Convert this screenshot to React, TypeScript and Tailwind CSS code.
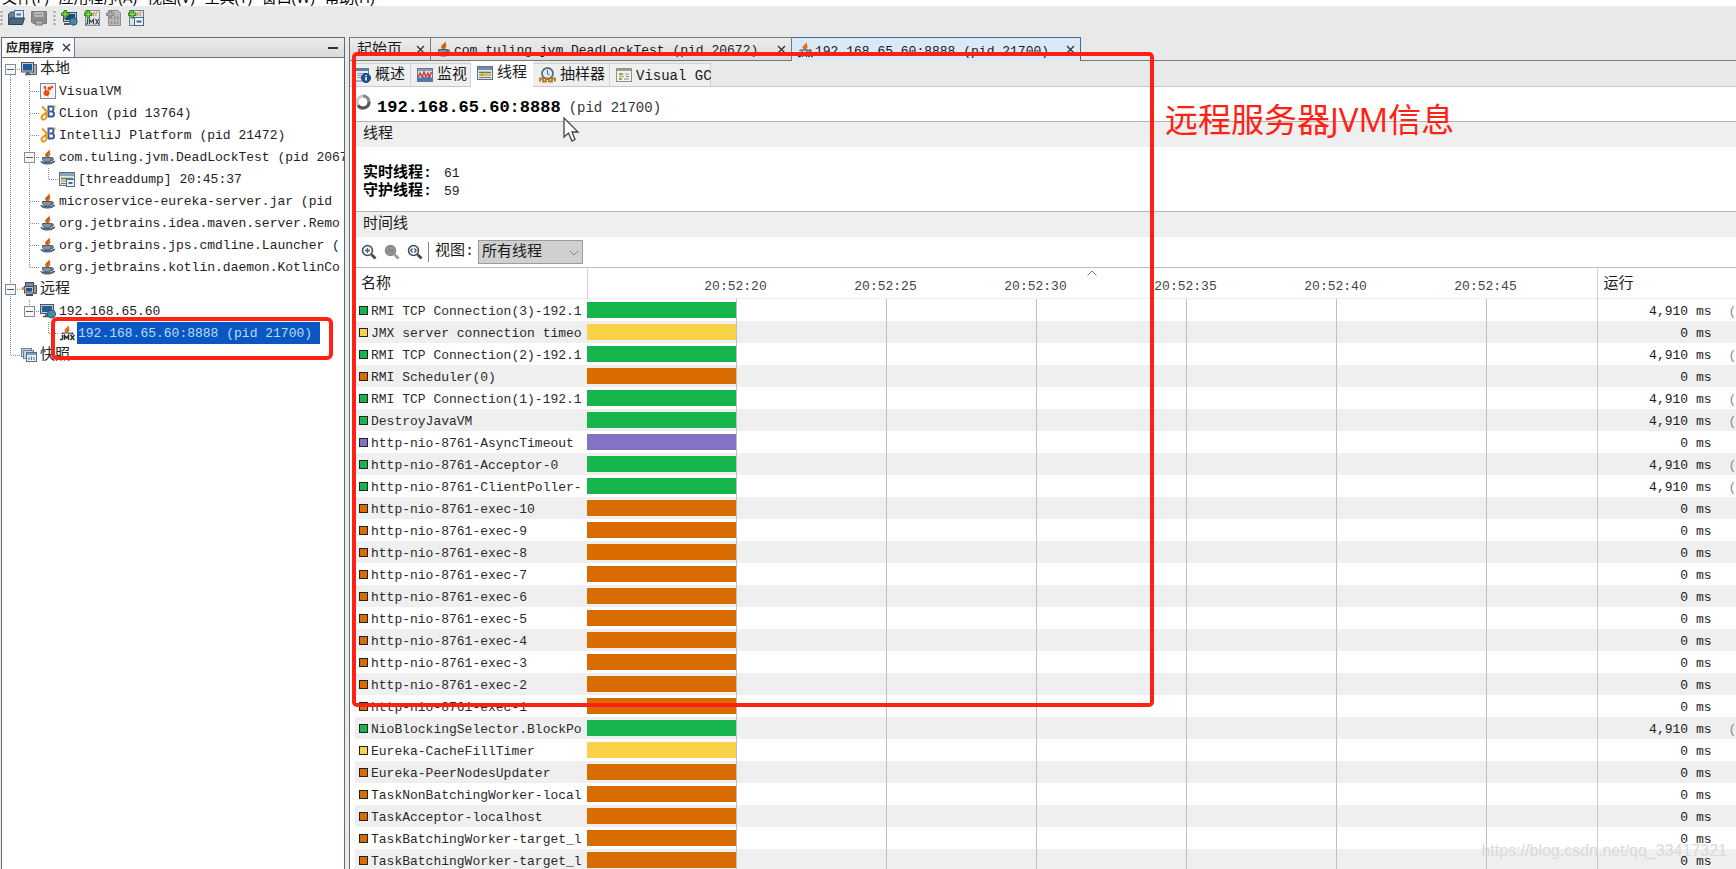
import React, { FC, ReactNode } from 'react'

// types
type IconProps = { className?: string }

type GuideKind = 'line' | 'tee' | 'end' | 'open' | 'openLast' | 'openFirst' | 'blank'

type TreeNode = {
  label: string
  icon: FC<IconProps>
  guides: GuideKind[]
  selected?: boolean
}

type ThreadState = 'running' | 'wait' | 'park' | 'sleeping'

type Thread = {
  name: string
  state: ThreadState
}

// icons
const JavaIcon: FC<IconProps> = ({ className = '' }) => (
  <svg className={`shrink-0 ${className}`} width="16" height="16" viewBox="0 0 16 16" fill="none">
    <path d="M9 0C10 2 5 3.500 5 6C5 7.500 6.500 8 7.600 9C9 8 11.500 5 10 3.500C10.200 2 9.800 0.800 9 0Z" fill="#e0701a" />
    <path d="M9 3C7 4.500 7 6 8 7.500" stroke="#a94c0c" />
    <path d="M2.500 8.500H11.500C11.500 11 10.500 12.500 9 13H5C3.500 12.500 2.500 11 2.500 8.500Z" fill="#7d93a8" stroke="#44586c" />
    <path d="M11.500 9C14 8.500 14 11.500 10.500 11.500" stroke="#44586c" strokeWidth="1.300" />
    <path d="M0.800 12.500C2 16 13 16 15 12C11 14 4 14 0.800 12.500Z" fill="#6d8296" stroke="#44586c" />
  </svg>
)

const JmxIcon: FC<IconProps> = ({ className = '' }) => (
  <svg className={`shrink-0 ${className}`} width="16" height="16" viewBox="0 0 16 16" fill="none">
    <path d="M9 0C10 2 5 3.500 5.500 6L7.600 8.500C10 7 11.500 5 10 3.500C10.200 2 9.800 0.800 9 0Z" fill="#e0701a" />
    <path d="M2.500 9C3.500 7.500 11 7.500 12 9M12 8C14.500 7.500 14.500 9.500 12.500 9.500" stroke="#5b6672" strokeWidth="1.400" />
    <path d="M3.500 10V13.500Q3.500 15 1 14.500M5.500 15V10.500L7.500 13L9.500 10.500V15M11.500 10L15.500 15M15.500 10L11.500 15" stroke="#2f2f2f" strokeWidth="1.500" />
  </svg>
)

const JetBrainsIcon: FC<IconProps> = ({ className = '' }) => (
  <svg className={`shrink-0 ${className}`} width="16" height="16" viewBox="0 0 16 16" fill="none">
    <path d="M8.500 1.500H12Q13.500 1.500 13.500 4Q13.500 6 12 6.500Q14 7 14 9Q14 11.500 12 11.500H8.500Z" stroke="#3a5a9c" strokeWidth="2" />
    <path d="M8.500 6.500H12" stroke="#3a5a9c" strokeWidth="1.500" />
    <path d="M2 1.500L6.500 6V11Q6 15 3 14.500Q0.800 13.500 2 11L8 6M4 9.500L1 12" stroke="#e39a1c" strokeWidth="2" />
    <path d="M13.500 0.500L15.500 2" stroke="#e39a1c" strokeWidth="1.500" />
  </svg>
)

const VisualVmIcon: FC<IconProps> = ({ className = '' }) => (
  <svg className={`shrink-0 ${className}`} width="16" height="16" viewBox="0 0 16 16" fill="none">
    <rect x="0.500" y="0.500" width="15" height="15" fill="#f6f4f2" stroke="#6d8bb5" />
    <circle cx="6.500" cy="10" r="3" fill="#e2521a" />
    <circle cx="5" cy="4.500" r="1.400" fill="#e2521a" />
    <circle cx="9.500" cy="5.500" r="2" fill="#e2521a" />
    <circle cx="12" cy="4" r="1.300" fill="#e2521a" />
    <path d="M5 4.500L6.500 9M9.500 5.500L12 3.500M6.500 10L8 13.500" stroke="#e2521a" />
  </svg>
)

const LocalIcon: FC<IconProps> = ({ className = '' }) => (
  <svg className={`shrink-0 ${className}`} width="16" height="16" viewBox="0 0 16 16" fill="none">
    <path d="M12 3.500H15.500V13.500H10" fill="#a9adb3" stroke="#5f656d" />
    <rect x="0.500" y="1.500" width="12" height="9.500" fill="#c4c9d0" stroke="#4b5563" />
    <rect x="2" y="3" width="9" height="6.500" fill="#1d5a94" />
    <path d="M4 13.500H10M5 12H9" stroke="#555b63" strokeWidth="1.500" />
  </svg>
)

const RemoteIcon: FC<IconProps> = ({ className = '' }) => (
  <svg className={`shrink-0 ${className}`} width="16" height="16" viewBox="0 0 16 16" fill="none">
    <rect x="4.500" y="1.500" width="8" height="6" fill="#7c8ba0" stroke="#3e4a5b" />
    <path d="M12.500 4.500H15.500V12.500H12" fill="#949ca8" stroke="#4b5563" />
    <rect x="3.500" y="5.500" width="9" height="6.500" fill="#b8c1cc" stroke="#3e4a5b" />
    <rect x="5" y="7" width="6" height="3.500" fill="#1f5188" />
    <path d="M5 14H12" stroke="#3e4a5b" strokeWidth="2" />
    <path d="M0 7.500L2 5.500L4 7.500L2 9.500Z" fill="#c98a3c" />
  </svg>
)

const HostIcon: FC<IconProps> = ({ className = '' }) => (
  <svg className={`shrink-0 ${className}`} width="16" height="16" viewBox="0 0 16 16" fill="none">
    <rect x="0.500" y="1.500" width="13" height="9" fill="#c4c9d0" stroke="#4b5563" />
    <rect x="2" y="3" width="10" height="6" fill="#215f99" />
    <path d="M3 13.500H8M5 12H8" stroke="#555b63" strokeWidth="1.500" />
    <circle cx="11.500" cy="11" r="4" fill="#4a88c7" stroke="#24507c" />
    <path d="M10 8.500Q13 8 12 10.500Q14 12 11.500 14Q11 11.500 9 10.500Z" fill="#3f9b35" />
  </svg>
)

const SnapshotIcon: FC<IconProps> = ({ className = '' }) => (
  <svg className={`shrink-0 ${className}`} width="16" height="16" viewBox="0 0 16 16" fill="none">
    <rect x="0.500" y="1.500" width="10" height="8" fill="#c6d3e1" stroke="#6b7f96" />
    <rect x="2.500" y="3.500" width="10" height="8" fill="#c6d3e1" stroke="#6b7f96" />
    <rect x="5.500" y="5.500" width="10" height="9" fill="#e8eef5" stroke="#55708f" />
    <path d="M6 7H15" stroke="#7f9dbd" strokeWidth="2" />
    <path d="M8 13V10M10.500 13V9.500M13 13V10" stroke="#55708f" />
  </svg>
)

const ThreadsIcon: FC<IconProps> = ({ className = '' }) => (
  <svg className={`shrink-0 ${className}`} width="16" height="16" viewBox="0 0 16 16" fill="none">
    <rect x="0.500" y="1.500" width="15" height="13" fill="#e4e8ec" stroke="#5c7087" />
    <path d="M1 3.500H15" stroke="#6f8db0" strokeWidth="3" />
    <path d="M2 7.500H14" stroke="#3f8d3a" strokeWidth="1.500" />
    <path d="M2 10H14" stroke="#e0a72b" strokeWidth="1.500" />
    <path d="M2 12.500H14" stroke="#6f7680" />
    <path d="M7 7.500H10M4 10H6" stroke="#d66a1d" strokeWidth="1.500" />
  </svg>
)

const DumpIcon: FC<IconProps> = ({ className = '' }) => (
  <svg className={`shrink-0 ${className}`} width="16" height="16" viewBox="0 0 16 16" fill="none">
    <rect x="0.500" y="1.500" width="15" height="13" fill="#e4e8ec" stroke="#5c7087" />
    <path d="M1 3.500H15" stroke="#8ba2bd" strokeWidth="3" />
    <path d="M2 7.500H14" stroke="#4f8d4a" strokeWidth="1.500" />
    <path d="M2 10H8" stroke="#e0a72b" strokeWidth="1.500" />
    <path d="M2 12.500H7" stroke="#6f7680" />
    <rect x="7.500" y="8.500" width="8" height="7" fill="#eef3f8" stroke="#4c6c90" />
    <path d="M9.500 12H13.500" stroke="#4c6c90" strokeWidth="2" />
  </svg>
)

const OverviewIcon: FC<IconProps> = ({ className = '' }) => (
  <svg className={`shrink-0 ${className}`} width="16" height="16" viewBox="0 0 16 16" fill="none">
    <rect x="0.500" y="1.500" width="13" height="12.500" fill="#e6ebf1" stroke="#63788f" />
    <path d="M1 3H13" stroke="#5a83b5" strokeWidth="2" />
    <path d="M2.500 6.500H11M2.500 8.500H8M2.500 10.500H7" stroke="#8795a5" />
    <circle cx="11" cy="11" r="4.500" fill="#1f4f9e" stroke="#173b78" />
    <path d="M11 8V9.200M11 10V13.500" stroke="#fff" strokeWidth="1.500" />
  </svg>
)

const MonitorIcon: FC<IconProps> = ({ className = '' }) => (
  <svg className={`shrink-0 ${className}`} width="16" height="16" viewBox="0 0 16 16" fill="none">
    <rect x="0.500" y="1.500" width="15" height="13" fill="#dde5ee" stroke="#63788f" />
    <path d="M1 3H15" stroke="#7f9dbd" strokeWidth="2" />
    <path d="M1 14V10L4 11L6 9L9 11L12 9L15 11V14Z" fill="#4879b6" />
    <path d="M1.500 10L3 6L5 10L7 5L9 10L11 6L12.500 10L14.500 5" stroke="#d63b32" strokeWidth="1.500" />
  </svg>
)

const SamplerIcon: FC<IconProps> = ({ className = '' }) => (
  <svg className={`shrink-0 ${className}`} width="17" height="16" viewBox="0 0 17 16" fill="none">
    <circle cx="8.500" cy="6.500" r="5.500" fill="#e3e9f1" stroke="#5b6b85" strokeWidth="1.800" />
    <path d="M8.500 3V7L10.500 8" stroke="#3b6aa8" />
    <path d="M1 14.500V11.500H4V14.500H7V11.500H10V14.500H13V11.500H16V14.500" stroke="#b9781b" strokeWidth="1.800" />
  </svg>
)

const GcIcon: FC<IconProps> = ({ className = '' }) => (
  <svg className={`shrink-0 ${className}`} width="16" height="16" viewBox="0 0 16 16" fill="none">
    <rect x="0.500" y="1.500" width="15" height="13" fill="#f3f4f2" stroke="#8a9188" />
    <path d="M1 3H15" stroke="#9aa19c" strokeWidth="2" />
    <path d="M3 7H7M3 12H6" stroke="#4c9a44" strokeWidth="1.500" />
    <path d="M9 7H13M8 12H13" stroke="#8b9097" />
    <path d="M3 9.500H8" stroke="#e0a72b" strokeWidth="1.500" />
    <path d="M10 9.500H13" stroke="#4c9a44" />
  </svg>
)

const Plus = () => (
  <path d="M3 0.500H5.500V3H8V5.500H5.500V8H3V5.500H0.500V3H3Z" fill="#7ed348" stroke="#2c7d14" />
)

const OpenIcon: FC<IconProps> = () => (
  <svg width="17" height="16" viewBox="0 0 17 16" fill="none">
    <path d="M0.500 14V4L3 2H8V9H1Z" fill="#6c8197" stroke="#3c5068" />
    <rect x="6.500" y="0.500" width="9" height="8" fill="#dfe9f4" stroke="#4b73a0" />
    <path d="M8.500 4.500H13" stroke="#4b73a0" strokeWidth="2" />
    <path d="M0.500 14.500L2.500 8H16.500L14.500 14.500Z" fill="#4d6882" stroke="#2c3e52" />
  </svg>
)

const SaveIcon: FC<IconProps> = () => (
  <svg width="16" height="16" viewBox="0 0 16 16" fill="none">
    <path d="M0.500 1.500H15.500V13.500H2L0.500 12Z" fill="#8d8d8d" stroke="#7c7c7c" />
    <path d="M3.500 2H12.500V7H3.500Z" fill="#b9b9b9" />
    <path d="M5 4.500H11" stroke="#8d8d8d" />
    <path d="M4.500 13V10.500H11.500V15H4.500Z" fill="#a9a9a9" stroke="#7c7c7c" />
  </svg>
)

const AddHostIcon: FC<IconProps> = () => (
  <svg width="17" height="16" viewBox="0 0 17 16" fill="none">
    <rect x="2.500" y="2.500" width="13" height="9" fill="#bcc6d2" stroke="#36506e" />
    <rect x="4" y="4" width="10" height="6" fill="#1c4a7c" />
    <path d="M3 14H9" stroke="#4b5563" strokeWidth="2" />
    <circle cx="12.500" cy="11.500" r="3.700" fill="#4a88c7" stroke="#24507c" />
    <path d="M11 9.500Q14 9 13 11.500Q15 12.500 12.500 14.500Q12 12 10.500 11.500Z" fill="#3f9b35" />
    <Plus />
  </svg>
)

const AddJmxIcon: FC<IconProps> = () => (
  <svg width="16" height="16" viewBox="0 0 16 16" fill="none">
    <rect x="1.500" y="0.500" width="14" height="15" fill="#dfe4e9" stroke="#8492a0" />
    <path d="M10.500 2Q8.500 4 10 6M13 1.500Q11 4 12 6" stroke="#e0832e" />
    <path d="M3.500 9V13Q3.500 14.500 1.500 14M5.500 14.500V9.500L7.500 12L9.500 9.500V14.500M11.500 9L15 14.500M15 9L11.500 14.500" stroke="#39424d" strokeWidth="1.200" />
    <Plus />
  </svg>
)

const AddCoreIcon: FC<IconProps> = () => (
  <svg width="16" height="16" viewBox="0 0 16 16" fill="none">
    <path d="M2.500 0.500H12L14.500 3V15.500H2.500Z" fill="#b8b8b8" stroke="#8f8f8f" />
    <path d="M9 6.500V9.500M12 6.500V9.500M5.500 11.500V14M8.500 11.500V14M11.500 11.500V14" stroke="#888" strokeWidth="1.300" />
    <path d="M3 0.500H5.500V3H8V5.500H5.500V8H3V5.500H0.500V3H3Z" fill="#a8a8a8" stroke="#858585" />
  </svg>
)

const AddSnapshotIcon: FC<IconProps> = () => (
  <svg width="16" height="16" viewBox="0 0 16 16" fill="none">
    <rect x="1.500" y="0.500" width="14" height="15" fill="#dfe4e9" stroke="#6b7f96" />
    <path d="M10.500 2Q8.500 4 10.500 6M13 1.500Q11 4 12.500 6" stroke="#e0832e" />
    <rect x="6.500" y="7.500" width="9" height="8" fill="#eef4fa" stroke="#3f679a" />
    <path d="M8.500 11.500H13.500" stroke="#3f679a" strokeWidth="2" />
    <Plus />
  </svg>
)

const ZoomIcon: FC<{ kind: 'in' | 'out' | 'fit' }> = ({ kind }) => (
  <svg width="16" height="16" viewBox="0 0 16 16" fill="none">
    <circle cx="6.500" cy="6.500" r="5" fill={kind === 'out' ? '#929292' : '#f4f6f8'} stroke={kind === 'out' ? '#8a8a8a' : '#434b55'} strokeWidth="1.500" />
    <path d="M10.500 10.500L14.500 14.500" stroke={kind === 'out' ? '#9a9a9a' : '#434b55'} strokeWidth="2.800" />
    {kind === 'in' && <path d="M4 6.500H9M6.500 4V9" stroke="#3e5c86" strokeWidth="1.300" />}
    {kind === 'out' && <path d="M4 6.500H9" stroke="#808080" strokeWidth="1.300" />}
    {kind === 'fit' && <path d="M5.500 4.500L3.800 6.500L5.500 8.500M7.500 4.500L9.200 6.500L7.500 8.500" stroke="#3e5c86" strokeWidth="1.300" />}
  </svg>
)

const CloseIcon: FC<IconProps> = () => (
  <svg width="9" height="9" viewBox="0 0 9 9" fill="none">
    <path d="M1 1L8 8M8 1L1 8" stroke="#333" strokeWidth="1.300" />
  </svg>
)

// one 19px column of the tree's dotted lines
const Guide: FC<{ kind: GuideKind }> = ({ kind }) => {
  const open = kind === 'open' || kind === 'openLast' || kind === 'openFirst'
  return (
    <svg className="shrink-0" width="19" height="22" viewBox="0 0 19 22" fill="none">
      <g stroke="#8c8c8c" strokeDasharray="1 1">
        {(kind === 'line' || kind === 'tee' || kind === 'open') && <path d="M8.500 0V22" />}
        {kind === 'openFirst' && <path d="M8.500 11V22" />}
        {(kind === 'end' || kind === 'openLast') && <path d="M8.500 0V11" />}
        {kind !== 'line' && kind !== 'blank' && <path d="M9 11.500H19" />}
      </g>
      {open && (
        <>
          <rect x="3.500" y="6.500" width="10" height="10" fill="#f6f6f6" stroke="#858b94" />
          <path d="M5 11.500H12" stroke="#3f5f95" />
        </>
      )}
    </svg>
  )
}

// data
const menus = ['文件(F)', '应用程序(A)', '视图(V)', '工具(T)', '窗口(W)', '帮助(H)']

const tree: TreeNode[] = [
  { label: '本地', icon: LocalIcon, guides: ['openFirst'] },
  { label: 'VisualVM', icon: VisualVmIcon, guides: ['line', 'tee'] },
  { label: 'CLion (pid 13764)', icon: JetBrainsIcon, guides: ['line', 'tee'] },
  { label: 'IntelliJ Platform (pid 21472)', icon: JetBrainsIcon, guides: ['line', 'tee'] },
  { label: 'com.tuling.jvm.DeadLockTest (pid 20672)', icon: JavaIcon, guides: ['line', 'open'] },
  { label: '[threaddump] 20:45:37', icon: DumpIcon, guides: ['line', 'line', 'end'] },
  { label: 'microservice-eureka-server.jar (pid', icon: JavaIcon, guides: ['line', 'tee'] },
  { label: 'org.jetbrains.idea.maven.server.Remo', icon: JavaIcon, guides: ['line', 'tee'] },
  { label: 'org.jetbrains.jps.cmdline.Launcher (', icon: JavaIcon, guides: ['line', 'tee'] },
  { label: 'org.jetbrains.kotlin.daemon.KotlinCo', icon: JavaIcon, guides: ['line', 'end'] },
  { label: '远程', icon: RemoteIcon, guides: ['open'] },
  { label: '192.168.65.60', icon: HostIcon, guides: ['line', 'openLast'] },
  { label: '192.168.65.60:8888 (pid 21700)', icon: JmxIcon, guides: ['line', 'blank', 'end'], selected: true },
  { label: '快照', icon: SnapshotIcon, guides: ['end'] },
]

const times = ['20:52:20', '20:52:25', '20:52:30', '20:52:35', '20:52:40', '20:52:45']

const threads: Thread[] = [
  { name: 'RMI TCP Connection(3)-192.1', state: 'running' },
  { name: 'JMX server connection timeo', state: 'wait' },
  { name: 'RMI TCP Connection(2)-192.1', state: 'running' },
  { name: 'RMI Scheduler(0)', state: 'park' },
  { name: 'RMI TCP Connection(1)-192.1', state: 'running' },
  { name: 'DestroyJavaVM', state: 'running' },
  { name: 'http-nio-8761-AsyncTimeout', state: 'sleeping' },
  { name: 'http-nio-8761-Acceptor-0', state: 'running' },
  { name: 'http-nio-8761-ClientPoller-', state: 'running' },
  { name: 'http-nio-8761-exec-10', state: 'park' },
  { name: 'http-nio-8761-exec-9', state: 'park' },
  { name: 'http-nio-8761-exec-8', state: 'park' },
  { name: 'http-nio-8761-exec-7', state: 'park' },
  { name: 'http-nio-8761-exec-6', state: 'park' },
  { name: 'http-nio-8761-exec-5', state: 'park' },
  { name: 'http-nio-8761-exec-4', state: 'park' },
  { name: 'http-nio-8761-exec-3', state: 'park' },
  { name: 'http-nio-8761-exec-2', state: 'park' },
  { name: 'http-nio-8761-exec-1', state: 'park' },
  { name: 'NioBlockingSelector.BlockPo', state: 'running' },
  { name: 'Eureka-CacheFillTimer', state: 'wait' },
  { name: 'Eureka-PeerNodesUpdater', state: 'park' },
  { name: 'TaskNonBatchingWorker-local', state: 'park' },
  { name: 'TaskAcceptor-localhost', state: 'park' },
  { name: 'TaskBatchingWorker-target_l', state: 'park' },
  { name: 'TaskBatchingWorker-target_l', state: 'park' },
]

const stateColors: Record<ThreadState, string> = {
  running: 'bg-[#17b64c]',
  wait: 'bg-[#f8d348]',
  park: 'bg-[#d86c00]',
  sleeping: 'bg-[#8472c6]',
}

const views = [
  { label: '概述', icon: OverviewIcon, width: 'w-[56px]' },
  { label: '监视', icon: MonitorIcon, width: 'w-[60px] pl-1.5' },
  { label: '线程', icon: ThreadsIcon, width: 'w-[62px] pl-1.5', active: true },
  { label: '抽样器', icon: SamplerIcon, width: 'w-[77px] pl-1.5' },
  { label: 'Visual GC', icon: GcIcon, width: 'w-[101px] pl-1.5' },
]

const Grip = () => (
  <svg className="-mr-px" width="3" height="16" viewBox="0 0 3 16">
    <path d="M1.500 1V16" stroke="#a0a0a0" strokeWidth="2" strokeDasharray="2 2" />
  </svg>
)

const ToolBar = () => (
  <div className="flex h-[31px] shrink-0 items-start gap-1.5 bg-[#e9e9e9] pt-1">
    <Grip />
    <button aria-label="打开"><OpenIcon /></button>
    <button aria-label="保存"><SaveIcon /></button>
    <Grip />
    <button aria-label="添加主机"><AddHostIcon /></button>
    <button aria-label="添加 JMX 连接"><AddJmxIcon /></button>
    <button aria-label="添加核心转储"><AddCoreIcon /></button>
    <button aria-label="添加快照"><AddSnapshotIcon /></button>
  </div>
)

const Sidebar = () => (
  <aside className="ml-px flex w-[344px] shrink-0 flex-col border border-b-0 border-[#5f6b7a] bg-white">
    <div className="flex h-5 shrink-0 items-center border-b border-[#6f6f6f] bg-linear-to-b from-[#ececec] to-[#dadada]">
      <div className="flex h-[19px] w-[73px] items-center gap-2 border-r border-[#5b7fa6] bg-[#fafafa] pl-1">
        <span className="pt-0.5 text-[12px] leading-[18px] font-bold whitespace-nowrap">应用程序</span>
        <button aria-label="关闭"><CloseIcon /></button>
      </div>
      <button aria-label="最小化" className="mr-1.5 ml-auto h-0.5 w-2.5 bg-[#333]" />
    </div>
    <ul className="overflow-hidden">
      {tree.map((node) => {
        const Icon = node.icon
        return (
          <li key={node.label} className="flex h-[22px] items-center">
            {node.guides.map((kind, i) => (
              <Guide key={i} kind={kind} />
            ))}
            <Icon />
            <span
              className={`ml-0.5 pt-0.5 pl-px text-[13px] leading-5 whitespace-nowrap ${
                node.selected ? 'bg-[#0a57c2] pr-2 text-[#b9dcff]' : 'text-[#222]'
              }`}
            >
              {/^[\x20-\x7e]+$/.test(node.label) ? node.label : <span className="text-[15px]">{node.label}</span>}
            </span>
          </li>
        )
      })}
    </ul>
  </aside>
)

type DocTabProps = { width: string; active?: boolean; icon?: ReactNode; children: ReactNode }

const DocTab: FC<DocTabProps> = ({ width, active, icon, children }) => (
  <div
    className={`flex h-6 items-center border-t border-r px-[5px] ${width} ${
      active ? 'border-[#3f6f96] bg-[#dbe8f6]' : 'border-b border-[#7a7a7a] bg-linear-to-b from-[#ececec] to-[#dcdcdc]'
    }`}
  >
    {icon}
    <button className="ml-0.5 pt-1 leading-[18px] whitespace-nowrap">{children}</button>
    <button aria-label="关闭" className="ml-auto"><CloseIcon /></button>
  </div>
)

const SectionTitle: FC<{ children: ReactNode }> = ({ children }) => (
  <h2 className="h-[26px] shrink-0 border-t border-[#b4b4b4] bg-[#efefef] pl-2 text-[15px] leading-[25px]">{children}</h2>
)

const ThreadTable = () => (
  <table className="w-full table-fixed border-collapse border-t border-[#bdbdbd] text-[13px]">
    <colgroup>
      <col className="w-[232px]" />
      <col />
      <col className="w-[139px]" />
    </colgroup>
    <thead>
      <tr className="h-[31px] border-b border-[#ececec]">
        <th className="border-r border-[#d0d0d0] pt-1 pb-0 pl-1.5 text-left text-[15px] leading-5 font-normal">名称</th>
        <th className="relative p-0 font-normal">
          <div className="flex overflow-hidden pt-2 pl-[73px]">
            {times.map((time) => (
              <span key={time} className="w-[150px] shrink-0 text-center leading-4 text-[#444]">{time}</span>
            ))}
          </div>
          <svg className="absolute top-0.5 left-1/2 -translate-x-1/2" width="10" height="6" viewBox="0 0 10 6" fill="none">
            <path d="M0.500 5.500L5 1L9.500 5.500" stroke="#777" />
          </svg>
        </th>
        <th className="border-l border-[#d0d0d0] pt-1 pb-0 pl-1.5 text-left text-[15px] leading-5 font-normal">运行</th>
      </tr>
    </thead>
    <tbody>
      {threads.map((thread, i) => (
        <tr key={i} className="h-[22px] odd:bg-white even:bg-[#efefef]">
          <td className="overflow-hidden p-0">
            <div className="flex h-[22px] items-center pl-1">
              <span className={`size-[9px] shrink-0 border border-[#222] ${stateColors[thread.state]}`} />
              <span className="ml-[3px] self-end leading-[18px] whitespace-nowrap text-[#2a2a2a]">{thread.name}</span>
            </div>
          </td>
          <td className="p-0">
            <div className="flex h-[22px] overflow-hidden">
              {times.map((time, t) => (
                <div key={time} className="flex w-[150px] shrink-0 items-center border-r border-[#bfbfc4]">
                  {t === 0 && <div className={`h-4 w-full ${stateColors[thread.state]}`} />}
                </div>
              ))}
            </div>
          </td>
          <td className="overflow-hidden border-l border-[#c3cbe2] p-0">
            <div className="flex h-[22px] items-end leading-[18px] whitespace-nowrap">
              <span className="w-[114px] shrink-0 text-right">{thread.state === 'running' ? '4,910 ms' : '0 ms'}</span>
              {thread.state === 'running' && <span className="ml-[17px] text-[#888]">(1</span>}
            </div>
          </td>
        </tr>
      ))}
    </tbody>
  </table>
)

const App = () => {
  return (
    <div className="relative flex h-screen flex-col overflow-hidden bg-[#e9e9e9] font-['Liberation_Mono','Noto_Sans_CJK_SC',monospace] text-[13px] text-[#1a1a1a]">
      <nav className="flex h-1.5 shrink-0 items-end gap-2.5 overflow-hidden bg-white pl-0.5 font-['Open_Sans','Noto_Sans_CJK_SC',sans-serif] text-[15px] leading-[18px] text-black">
        {menus.map((menu) => (
          <button key={menu} className="whitespace-nowrap">{menu}</button>
        ))}
      </nav>
      <ToolBar />

      <div className="flex min-h-0 flex-1 gap-1">
        <Sidebar />

        <main className="flex min-w-0 flex-1 flex-col border-l border-[#6f6f6f] bg-white">
          {/* document tabs */}
          <div className="flex h-6 shrink-0 bg-[#e9e9e9]">
            <DocTab width="w-[81px]"><span className="text-[15px]">起始页</span></DocTab>
            <DocTab width="w-[361px]" icon={<JavaIcon />}>com.tuling.jvm.DeadLockTest (pid 20672)</DocTab>
            <DocTab width="w-[289px]" active icon={<JmxIcon />}>192.168.65.60:8888 (pid 21700)</DocTab>
            <div className="flex-1 border-b border-[#7a7a7a]" />
          </div>

          {/* view tabs */}
          <div className="flex h-[26px] shrink-0 items-end border-b border-[#c9c9c9] bg-[#e9e9e9] pl-[5px]">
            {views.map(({ label, icon: Icon, width, active }) => (
              <button
                key={label}
                className={`flex items-center gap-1 border-t border-r whitespace-nowrap ${width} ${
                  active ? '-mb-px h-[26px] border-white bg-white pb-1' : 'h-[23px] border-[#d2d2d2] bg-[#efefef]'
                }`}
              >
                <Icon />
                <span className={label === 'Visual GC' ? 'pt-0.5 text-[14px] leading-5' : 'pt-0.5 text-[15px] leading-5'}>{label}</span>
              </button>
            ))}
          </div>

          <div className="flex min-h-0 flex-1 flex-col overflow-hidden pl-[5px]">
            <div className="flex h-[34px] shrink-0 items-center">
              <svg className="-mt-1" width="16" height="16" viewBox="0 0 16 16" fill="none">
                <circle cx="8" cy="8" r="6" stroke="#c9c9c9" strokeWidth="3" />
                <path d="M8 2A6 6 0 0 1 14 8" stroke="#8a8a8a" strokeWidth="3" />
                <path d="M14 8A6 6 0 0 1 3 11.300" stroke="#555" strokeWidth="3" />
              </svg>
              <h1 className="ml-1.5 pt-2 text-[17px] leading-6 font-bold text-black">192.168.65.60:8888</h1>
              <span className="ml-2 pt-2 text-[14px] leading-6 text-[#333]">(pid 21700)</span>
            </div>

            <SectionTitle>线程</SectionTitle>
            <dl className="grid h-16 shrink-0 grid-cols-[89px_1fr] content-center pt-2 text-[13px] leading-[18px]">
              <dt className="pl-2 text-[15px] leading-[18px] font-bold whitespace-nowrap text-black">实时线程:</dt>
              <dd>61</dd>
              <dt className="pl-2 text-[15px] leading-[18px] font-bold whitespace-nowrap text-black">守护线程:</dt>
              <dd>59</dd>
            </dl>

            <SectionTitle>时间线</SectionTitle>
            <div className="flex h-[30px] shrink-0 items-center pl-1.5">
              <div className="flex gap-[7px]">
                <button aria-label="放大"><ZoomIcon kind="in" /></button>
                <button aria-label="缩小"><ZoomIcon kind="out" /></button>
                <button aria-label="适合窗口"><ZoomIcon kind="fit" /></button>
              </div>
              <label htmlFor="view" className="ml-[5px] border-l border-[#888] pl-1.5 text-[15px] leading-5">视图:</label>
              <div className="relative ml-1">
                <select id="view" className="h-6 w-[105px] appearance-none border border-[#9b9b9b] bg-[#d0d0d0] pt-0.5 pl-[3px] text-[15px] leading-5 text-[#1a1a1a]">
                  <option>所有线程</option>
                </select>
                <svg className="pointer-events-none absolute top-[10px] right-1" width="10" height="6" viewBox="0 0 10 6" fill="none">
                  <path d="M0.500 0.500L5 5L9.500 0.500" stroke="#888" />
                </svg>
              </div>
            </div>

            <ThreadTable />
          </div>
        </main>
      </div>

      {/* annotations over the window */}
      <div className="pointer-events-none absolute top-[52px] left-[352px] h-[655px] w-[802px] rounded-[5px] border-4 border-[#ff2112]" />
      <div className="pointer-events-none absolute top-[317px] left-[51px] h-[43px] w-[282px] rounded-md border-4 border-[#ff2112]" />
      <p className="absolute top-[97px] left-[1165px] font-['Open_Sans','Noto_Sans_CJK_SC',sans-serif] text-[33px] leading-[46px] font-normal whitespace-nowrap text-[#ff2112]">
        远程服务器JVM信息
      </p>
      <svg className="pointer-events-none absolute top-[117px] left-[563px]" width="17" height="26" viewBox="0 0 17 26">
        <path d="M1 1V20L5.500 16L9 24L12 22.500L9 15H15Z" fill="#fff" stroke="#444" strokeWidth="1.300" />
      </svg>
      <p className="absolute right-[9px] bottom-1.5 font-['Liberation_Sans',sans-serif] text-[16px] text-[#dadada]">
        https://blog.csdn.net/qq_33417321
      </p>
    </div>
  )
}

export default App
